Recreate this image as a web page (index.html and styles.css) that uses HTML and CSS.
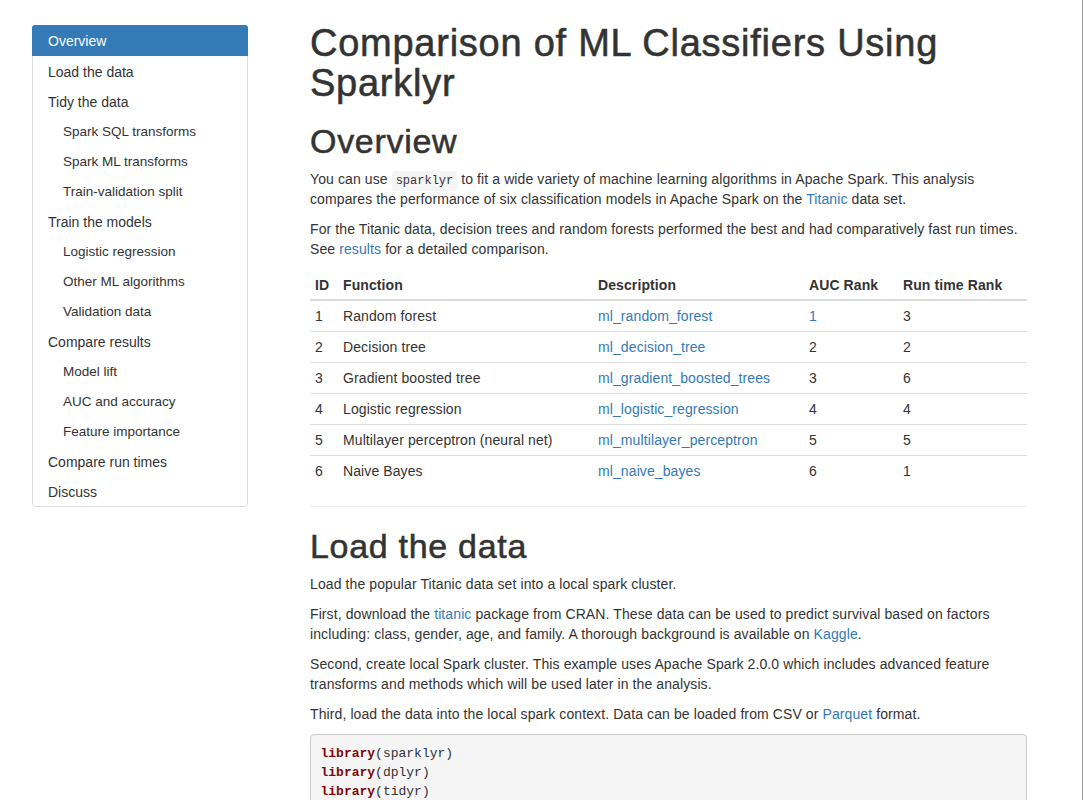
FILE: index.html
```html
<!DOCTYPE html>
<html>
<head>
<meta charset="utf-8">
<title>Comparison of ML Classifiers Using Sparklyr</title>
<link rel="stylesheet" href="styles.css">
</head>
<body>
<div class="page">
  <nav class="toc">
    <a class="toc-item active" href="#overview">Overview</a>
    <a class="toc-item" href="#load">Load the data</a>
    <a class="toc-item" href="#tidy">Tidy the data</a>
    <a class="toc-item sub" href="#sql">Spark SQL transforms</a>
    <a class="toc-item sub" href="#ml">Spark ML transforms</a>
    <a class="toc-item sub" href="#split">Train-validation split</a>
    <a class="toc-item" href="#train">Train the models</a>
    <a class="toc-item sub" href="#logistic">Logistic regression</a>
    <a class="toc-item sub" href="#other">Other ML algorithms</a>
    <a class="toc-item sub" href="#validation">Validation data</a>
    <a class="toc-item" href="#compare">Compare results</a>
    <a class="toc-item sub" href="#lift">Model lift</a>
    <a class="toc-item sub" href="#auc">AUC and accuracy</a>
    <a class="toc-item sub" href="#feature">Feature importance</a>
    <a class="toc-item" href="#runtimes">Compare run times</a>
    <a class="toc-item last" href="#discuss">Discuss</a>
  </nav>
  <main class="main">
    <h1 class="title">Comparison of ML Classifiers Using Sparklyr</h1>
    <h1 class="section" id="overview">Overview</h1>
    <p>You can use <code class="inline">sparklyr</code> to fit a wide variety of machine learning algorithms in Apache Spark. This analysis compares the performance of six classification models in Apache Spark on the <a href="#">Titanic</a> data set.</p>
    <p>For the Titanic data, decision trees and random forests performed the best and had comparatively fast run times. See <a href="#">results</a> for a detailed comparison.</p>
    <table class="models">
      <colgroup>
        <col class="c-id"><col class="c-fn"><col class="c-desc"><col class="c-auc"><col class="c-run">
      </colgroup>
      <thead>
        <tr><th>ID</th><th>Function</th><th>Description</th><th>AUC Rank</th><th>Run time Rank</th></tr>
      </thead>
      <tbody>
        <tr><td>1</td><td>Random forest</td><td><a href="#">ml_random_forest</a></td><td><a href="#">1</a></td><td>3</td></tr>
        <tr><td>2</td><td>Decision tree</td><td><a href="#">ml_decision_tree</a></td><td>2</td><td>2</td></tr>
        <tr><td>3</td><td>Gradient boosted tree</td><td><a href="#">ml_gradient_boosted_trees</a></td><td>3</td><td>6</td></tr>
        <tr><td>4</td><td>Logistic regression</td><td><a href="#">ml_logistic_regression</a></td><td>4</td><td>4</td></tr>
        <tr><td>5</td><td>Multilayer perceptron (neural net)</td><td><a href="#">ml_multilayer_perceptron</a></td><td>5</td><td>5</td></tr>
        <tr><td>6</td><td>Naive Bayes</td><td><a href="#">ml_naive_bayes</a></td><td>6</td><td>1</td></tr>
      </tbody>
    </table>
    <hr class="rule">
    <h1 class="section" id="load">Load the data</h1>
    <p>Load the popular Titanic data set into a local spark cluster.</p>
    <p>First, download the <a href="#">titanic</a> package from CRAN. These data can be used to predict survival based on factors including: class, gender, age, and family. A thorough background is available on <a href="#">Kaggle</a>.</p>
    <p>Second, create local Spark cluster. This example uses Apache Spark 2.0.0 which includes advanced feature transforms and methods which will be used later in the analysis.</p>
    <p>Third, load the data into the local spark context. Data can be loaded from CSV or <a href="#">Parquet</a> format.</p>
    <pre class="code"><span class="kw">library</span>(sparklyr)
<span class="kw">library</span>(dplyr)
<span class="kw">library</span>(tidyr)
<span class="kw">library</span>(titanic)
<span class="kw">library</span>(ggplot2)</pre>
  </main>
</div>
</body>
</html>
```

FILE: styles.css
```css
* { box-sizing: border-box; }
html, body { margin: 0; padding: 0; background: #fff; }
body {
  font-family: "Liberation Sans", Arial, sans-serif;
  font-size: 14px;
  line-height: 20px;
  letter-spacing: 0.1px;
  color: #333;
  overflow: hidden;
}
a { color: #337ab7; text-decoration: none; }

.page {
  display: flex;
  align-items: flex-start;
  width: 1083px;
  height: 800px;
  overflow: hidden;
  border-right: 1px solid #9a9a9a;
}

.toc {
  flex: 0 0 216px;
  margin: 25px 0 0 32px;
  display: flex;
  flex-direction: column;
  border: 1px solid #ddd;
  border-radius: 4px;
  background: #fff;
}
.toc-item {
  display: block;
  height: 30px;
  line-height: 32px;
  overflow: hidden;
  padding-left: 15px;
  color: #333;
  font-size: 14px;
  letter-spacing: 0;
}
.toc-item.sub { padding-left: 30px; font-size: 13.5px; }
.toc-item.active {
  background: #337ab7;
  color: #fff;
  border-radius: 3px 3px 0 0;
  margin: -1px -1px 0 -1px;
  padding-left: 16px;
  height: 31px;
  line-height: 32px;
}

.main {
  flex: 0 0 717px;
  margin-left: 62px;
}

h1 {
  font-weight: 500;
  color: #333;
  margin: 0;
  -webkit-text-stroke: 0.55px #333;
}
h1.title {
  font-size: 38px;
  line-height: 40px;
  letter-spacing: 0.75px;
  margin-top: 23px;
  margin-bottom: 20px;
}
h1.section {
  font-size: 34px;
  line-height: 36px;
  letter-spacing: 0.7px;
  margin-top: 0;
  margin-bottom: 10px;
}
p { margin: 0 0 10px 0; }

code.inline {
  font-family: "Liberation Mono", "Courier New", monospace;
  font-size: 12px;
  line-height: 1;
  letter-spacing: 0;
  background: #f5f5f5;
  border-radius: 4px;
  padding: 3px 4px;
  color: #333;
}

.models {
  width: 717px;
  border-collapse: collapse;
  margin-top: 10px;
  margin-bottom: 20px;
  table-layout: fixed;
}
.c-id { width: 28px; }
.c-fn { width: 255px; }
.c-desc { width: 211px; }
.c-auc { width: 94px; }
.c-run { width: 129px; }
.models th {
  text-align: left;
  font-weight: bold;
  padding: 6px 5px 4px 5px;
  border-bottom: 2px solid #ddd;
  white-space: nowrap;
}
.models td {
  padding: 5px;
  border-bottom: 1px solid #ddd;
  white-space: nowrap;
}
.models tbody tr:last-child td { border-bottom: none; }

.rule {
  border: 0;
  border-top: 1px solid #eee;
  margin: 0 0 21px 0;
}

.code {
  margin: 0;
  padding: 9px 9.5px;
  background: #f5f5f5;
  border: 1px solid #ccc;
  border-radius: 4px;
  font-family: "Liberation Mono", "Courier New", monospace;
  font-size: 13px;
  line-height: 19px;
  letter-spacing: 0;
  color: #333;
}
.code .kw { color: #7d0a0a; font-weight: bold; }
```
